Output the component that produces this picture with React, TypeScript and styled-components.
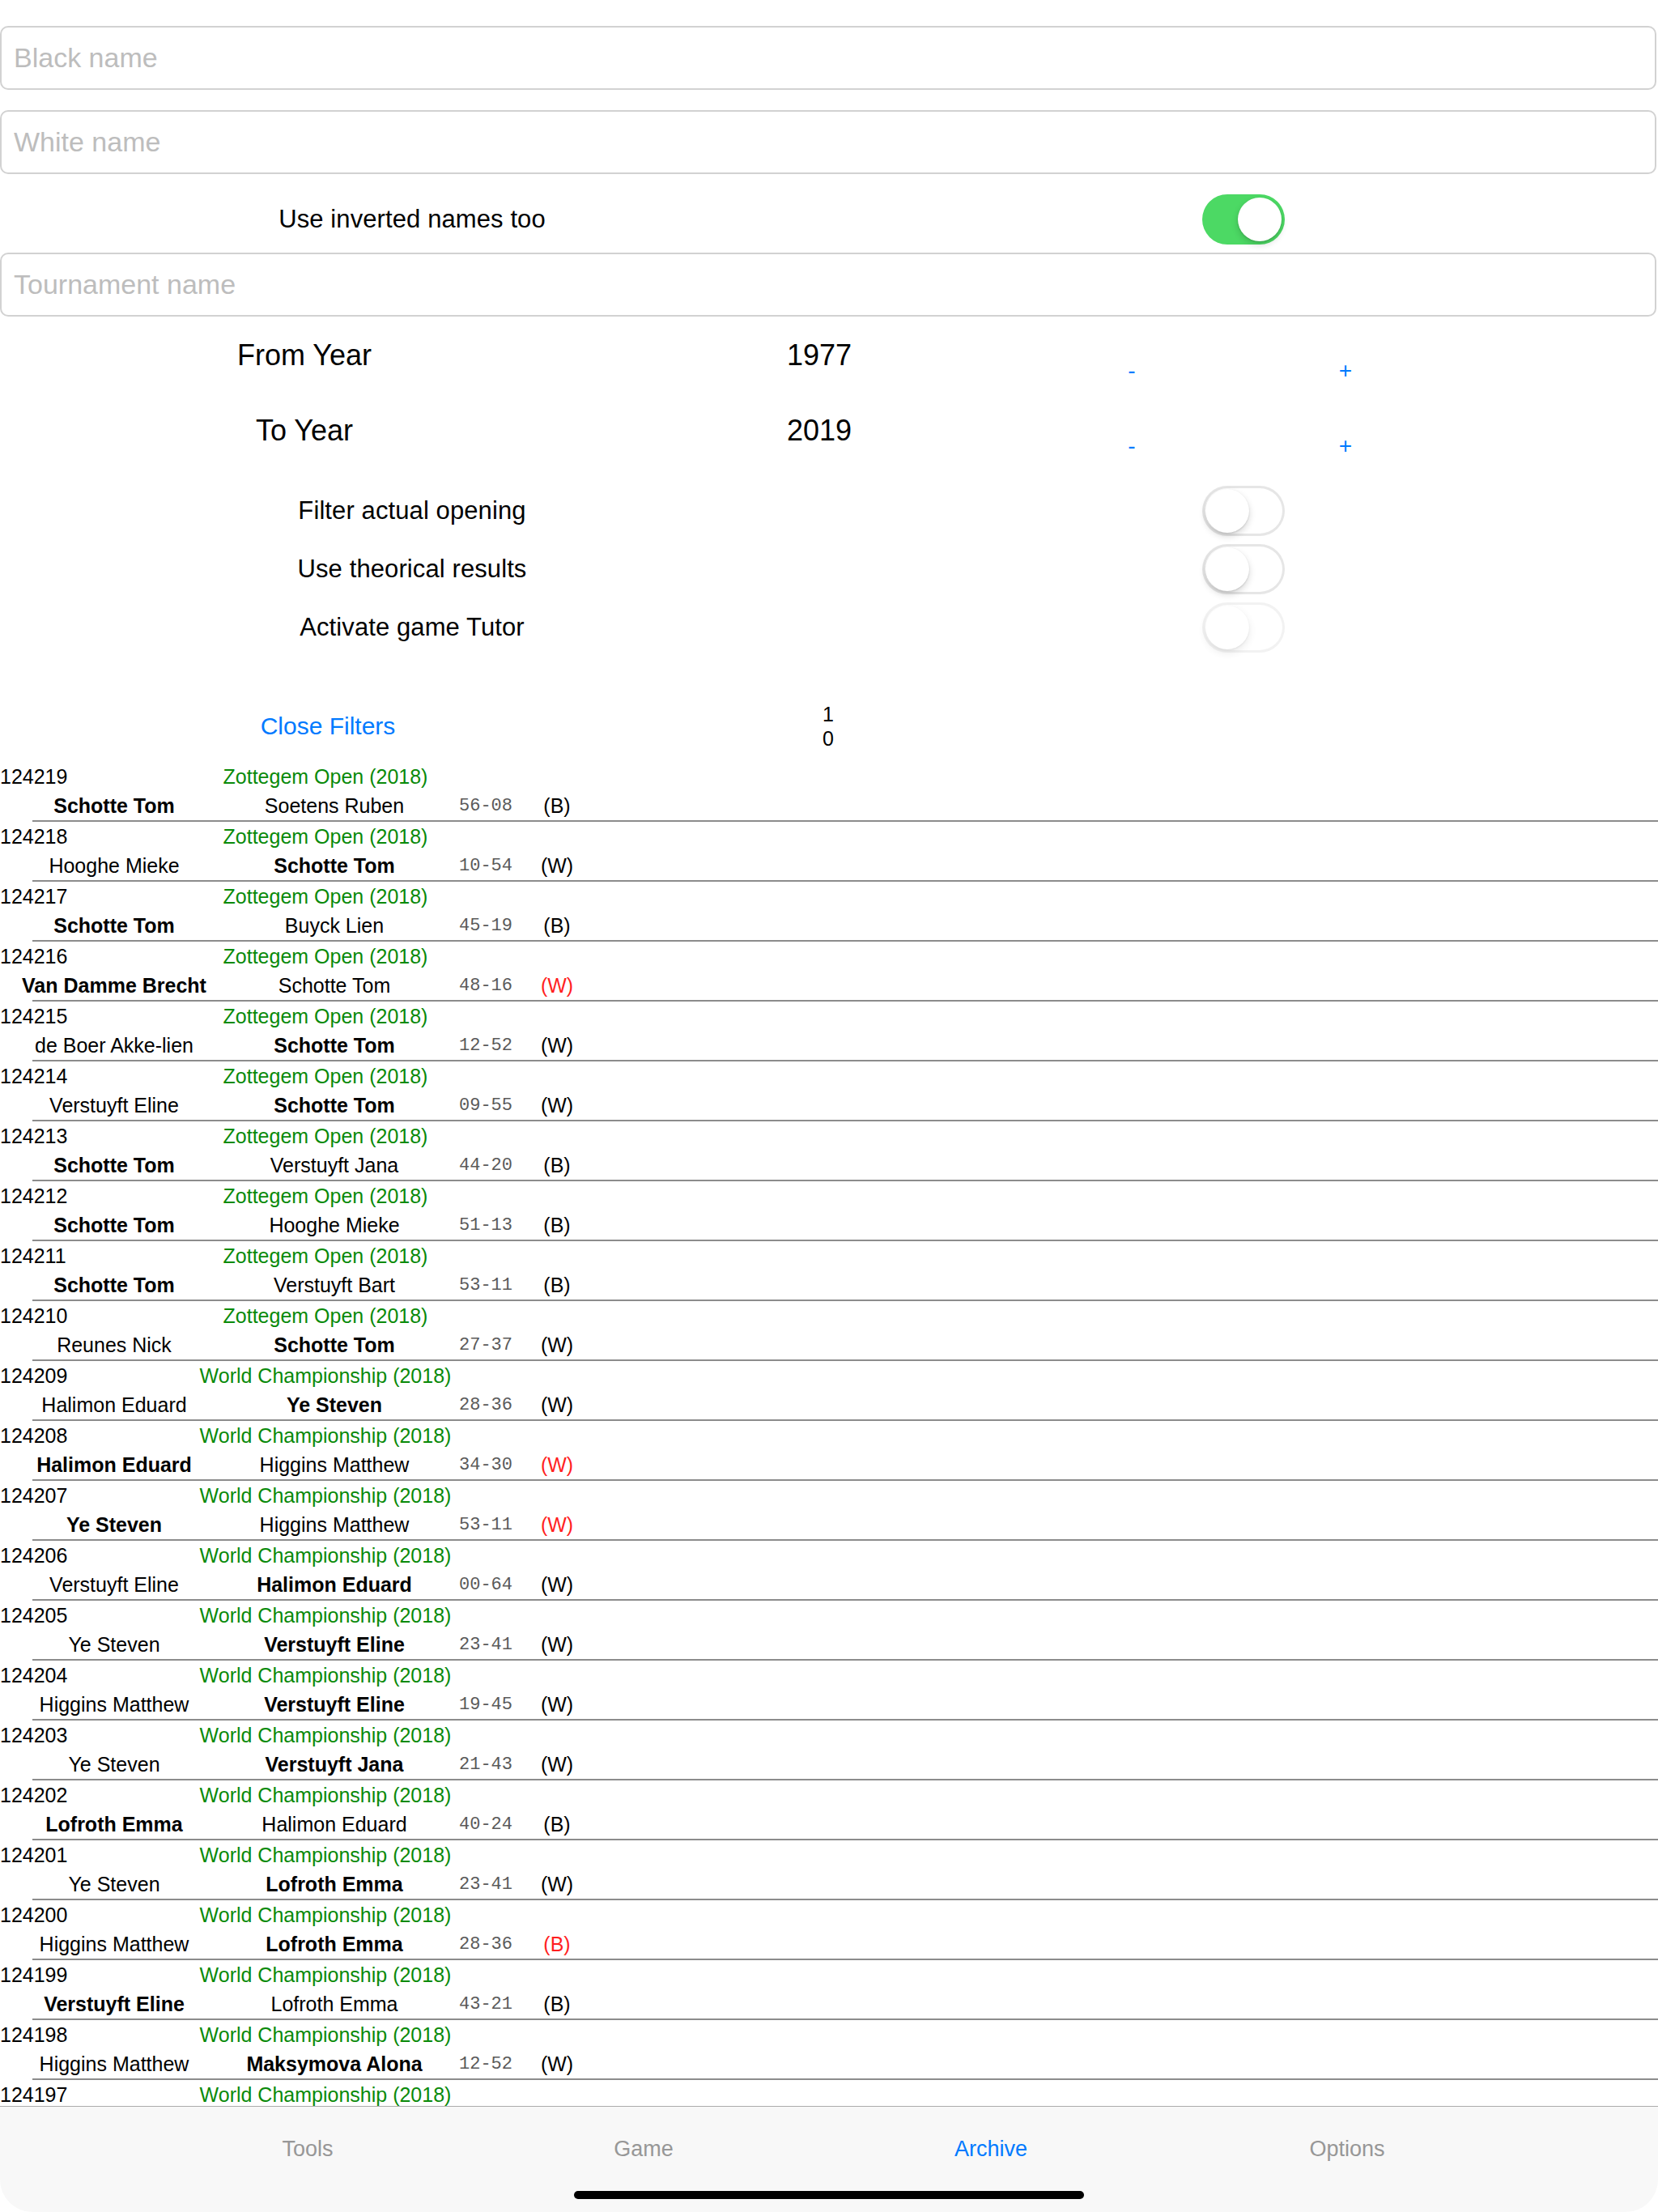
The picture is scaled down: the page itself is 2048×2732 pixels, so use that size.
import React, { useState } from "react";
import styled, { createGlobalStyle } from "styled-components";

const GlobalStyle = createGlobalStyle`
    html, body {
        margin: 0;
        padding: 0;
        background: #ffffff;
    }
    body {
        font-family: "Liberation Sans", Arial, sans-serif;
        color: #000000;
    }
    * {
        box-sizing: border-box;
    }
`;

const BLUE = "#007aff";

const Page = styled.div`
    width: 2048px;
    height: 2732px;
    display: flex;
    flex-direction: column;
    overflow: hidden;
    background: #ffffff;
`;

const Filters = styled.div`
    display: flex;
    flex-direction: column;
    padding-top: 32px;
`;

const TextField = styled.input<{ $gap?: number }>`
    display: block;
    width: 2046px;
    height: 79px;
    margin: 0 0 ${(p) => p.$gap ?? 0}px 0;
    padding: 0 0 0 15px;
    border: 2px solid #d2d2d2;
    border-radius: 10px;
    font-family: "Liberation Sans", Arial, sans-serif;
    font-size: 34px;
    color: #000;
    outline: none;
    background: #fff;

    &::placeholder {
        color: #bdbdbd;
    }
`;

const ToggleRow = styled.div<{ $height: number; $top?: number; $bottom?: number }>`
    display: grid;
    grid-template-columns: 1018px 1030px;
    align-items: center;
    justify-items: center;
    height: ${(p) => p.$height}px;
    margin-top: ${(p) => p.$top ?? 0}px;
    margin-bottom: ${(p) => p.$bottom ?? 0}px;
`;

const ToggleLabel = styled.span`
    font-size: 31px;
    letter-spacing: 0.1px;
`;

const SwitchTrack = styled.div<{ $on: boolean; $disabled?: boolean }>`
    position: relative;
    width: 102px;
    height: 62px;
    border-radius: 31px;
    background: ${(p) => (p.$on ? "#4cd964" : "#ffffff")};
    box-shadow: ${(p) => (p.$on ? "none" : "inset 0 0 0 3px #e6e6e6")};
    opacity: ${(p) => (p.$disabled ? 0.5 : 1)};
    cursor: pointer;
    margin-left: 6px;
`;

const SwitchKnob = styled.div<{ $on: boolean }>`
    position: absolute;
    top: 4px;
    left: ${(p) => (p.$on ? "44px" : "4px")};
    width: 54px;
    height: 54px;
    border-radius: 50%;
    background: #ffffff;
    box-shadow: 0 4px 9px rgba(0, 0, 0, 0.16), 0 1px 2px rgba(0, 0, 0, 0.14);
`;

const YearRow = styled.div`
    display: grid;
    grid-template-columns: 752px 520px 252px 276px;
    align-items: center;
    justify-items: center;
    height: 93px;
    padding-top: 3px;
`;

const YearLabel = styled.span`
    font-size: 36px;
`;

const YearValue = styled.span`
    font-size: 36px;
`;

const StepButton = styled.button`
    border: none;
    background: transparent;
    padding: 38px 0 0 0;
    font-family: "Liberation Sans", Arial, sans-serif;
    font-size: 28px;
    line-height: 32px;
    color: ${BLUE};
    cursor: pointer;
`;

const FooterRow = styled.div`
    display: grid;
    grid-template-columns: 810px 426px;
    align-items: center;
    justify-items: center;
    height: 60px;
    margin-top: 56px;
    margin-bottom: 14px;
`;

const LinkButton = styled.button`
    border: none;
    background: transparent;
    padding: 0;
    font-family: "Liberation Sans", Arial, sans-serif;
    font-size: 30px;
    color: ${BLUE};
    cursor: pointer;
`;

const Counter = styled.div`
    font-size: 25px;
    line-height: 30px;
    text-align: center;
`;

const List = styled.div`
    flex: 1;
    overflow: hidden;
`;

const GameRow = styled.div`
    display: flex;
    flex-direction: column;
`;

const HeadLine = styled.div`
    display: grid;
    grid-template-columns: 120px 564px;
    align-items: center;
    height: 36px;
    font-size: 25px;
`;

const GameId = styled.span`
    color: #000;
`;

const Tournament = styled.span`
    color: #0a8a0a;
    text-align: center;
`;

const PlayersLine = styled.div`
    display: grid;
    grid-template-columns: 282px 262px 112px 64px;
    align-items: center;
    justify-items: center;
    height: 36px;
    font-size: 25px;
`;

const Player = styled.span<{ $bold: boolean }>`
    font-weight: ${(p) => (p.$bold ? 700 : 400)};
    white-space: nowrap;
`;

const Score = styled.span`
    font-family: "Liberation Mono", "Courier New", monospace;
    font-size: 22px;
    color: #5a5a5a;
`;

const Result = styled.span<{ $lost: boolean }>`
    color: ${(p) => (p.$lost ? "#ff1f1f" : "#000")};
`;

const Divider = styled.div`
    height: 2px;
    margin-left: 40px;
    background: #8c8c8c;
`;

const TabBar = styled.div`
    flex: 0 0 131px;
    display: flex;
    flex-direction: column;
    background: #f8f8f8;
    border-top: 1px solid #ababab;
    border-bottom-left-radius: 40px;
    border-bottom-right-radius: 40px;
`;

const TabRow = styled.div`
    display: grid;
    grid-template-columns: 440px 390px 468px 412px;
    padding-left: 160px;
    align-items: center;
    justify-items: center;
    height: 104px;
`;

const TabItem = styled.span<{ $active: boolean }>`
    font-size: 27px;
    color: ${(p) => (p.$active ? BLUE : "#979797")};
`;

const HomeIndicator = styled.div`
    width: 630px;
    height: 10px;
    margin: 0 auto;
    border-radius: 5px;
    background: #000;
`;

const ZOT = "Zottegem Open (2018)";
const WCH = "World Championship (2018)";

interface IGame {
    id: number;
    tournament: string;
    black?: string;
    white?: string;
    score?: string;
    result?: string;
    bold?: 1 | 2;
    lost?: boolean;
}

const games: IGame[] = [
    { id: 124219, tournament: ZOT, black: "Schotte Tom", white: "Soetens Ruben", score: "56-08", result: "(B)", bold: 1 },
    { id: 124218, tournament: ZOT, black: "Hooghe Mieke", white: "Schotte Tom", score: "10-54", result: "(W)", bold: 2 },
    { id: 124217, tournament: ZOT, black: "Schotte Tom", white: "Buyck Lien", score: "45-19", result: "(B)", bold: 1 },
    { id: 124216, tournament: ZOT, black: "Van Damme Brecht", white: "Schotte Tom", score: "48-16", result: "(W)", bold: 1, lost: true },
    { id: 124215, tournament: ZOT, black: "de Boer Akke-lien", white: "Schotte Tom", score: "12-52", result: "(W)", bold: 2 },
    { id: 124214, tournament: ZOT, black: "Verstuyft Eline", white: "Schotte Tom", score: "09-55", result: "(W)", bold: 2 },
    { id: 124213, tournament: ZOT, black: "Schotte Tom", white: "Verstuyft Jana", score: "44-20", result: "(B)", bold: 1 },
    { id: 124212, tournament: ZOT, black: "Schotte Tom", white: "Hooghe Mieke", score: "51-13", result: "(B)", bold: 1 },
    { id: 124211, tournament: ZOT, black: "Schotte Tom", white: "Verstuyft Bart", score: "53-11", result: "(B)", bold: 1 },
    { id: 124210, tournament: ZOT, black: "Reunes Nick", white: "Schotte Tom", score: "27-37", result: "(W)", bold: 2 },
    { id: 124209, tournament: WCH, black: "Halimon Eduard", white: "Ye Steven", score: "28-36", result: "(W)", bold: 2 },
    { id: 124208, tournament: WCH, black: "Halimon Eduard", white: "Higgins Matthew", score: "34-30", result: "(W)", bold: 1, lost: true },
    { id: 124207, tournament: WCH, black: "Ye Steven", white: "Higgins Matthew", score: "53-11", result: "(W)", bold: 1, lost: true },
    { id: 124206, tournament: WCH, black: "Verstuyft Eline", white: "Halimon Eduard", score: "00-64", result: "(W)", bold: 2 },
    { id: 124205, tournament: WCH, black: "Ye Steven", white: "Verstuyft Eline", score: "23-41", result: "(W)", bold: 2 },
    { id: 124204, tournament: WCH, black: "Higgins Matthew", white: "Verstuyft Eline", score: "19-45", result: "(W)", bold: 2 },
    { id: 124203, tournament: WCH, black: "Ye Steven", white: "Verstuyft Jana", score: "21-43", result: "(W)", bold: 2 },
    { id: 124202, tournament: WCH, black: "Lofroth Emma", white: "Halimon Eduard", score: "40-24", result: "(B)", bold: 1 },
    { id: 124201, tournament: WCH, black: "Ye Steven", white: "Lofroth Emma", score: "23-41", result: "(W)", bold: 2 },
    { id: 124200, tournament: WCH, black: "Higgins Matthew", white: "Lofroth Emma", score: "28-36", result: "(B)", bold: 2, lost: true },
    { id: 124199, tournament: WCH, black: "Verstuyft Eline", white: "Lofroth Emma", score: "43-21", result: "(B)", bold: 1 },
    { id: 124198, tournament: WCH, black: "Higgins Matthew", white: "Maksymova Alona", score: "12-52", result: "(W)", bold: 2 },
    // 마지막 줄은 탭바 뒤로 잘려서 제목만 보임
    { id: 124197, tournament: WCH },
];

const tabs = ["Tools", "Game", "Archive", "Options"];

interface ISwitchProps {
    on: boolean;
    disabled?: boolean;
    onToggle?: () => void;
}

const Switch: React.FC<ISwitchProps> = ({ on, disabled, onToggle }) => (
    <SwitchTrack $on={on} $disabled={disabled} role="switch" aria-checked={on} onClick={disabled ? undefined : onToggle}>
        <SwitchKnob $on={on} />
    </SwitchTrack>
);

const App: React.FC = () => {
    const [inverted, setInverted] = useState(true);
    const [filterOpening, setFilterOpening] = useState(false);
    const [theorical, setTheorical] = useState(false);
    const [fromYear, setFromYear] = useState(1977);
    const [toYear, setToYear] = useState(2019);

    return (
        <Page>
            <GlobalStyle />
            <Filters>
                <TextField placeholder="Black name" $gap={25} />
                <TextField placeholder="White name" />
                <ToggleRow $height={63} $top={24} $bottom={10}>
                    <ToggleLabel>Use inverted names too</ToggleLabel>
                    <Switch on={inverted} onToggle={() => setInverted(!inverted)} />
                </ToggleRow>
                <TextField placeholder="Tournament name" />
                <YearRow>
                    <YearLabel>From Year</YearLabel>
                    <YearValue>{fromYear}</YearValue>
                    <StepButton onClick={() => setFromYear(fromYear - 1)}>-</StepButton>
                    <StepButton onClick={() => setFromYear(fromYear + 1)}>+</StepButton>
                </YearRow>
                <YearRow>
                    <YearLabel>To Year</YearLabel>
                    <YearValue>{toYear}</YearValue>
                    <StepButton onClick={() => setToYear(toYear - 1)}>-</StepButton>
                    <StepButton onClick={() => setToYear(toYear + 1)}>+</StepButton>
                </YearRow>
                <ToggleRow $height={72} $top={18}>
                    <ToggleLabel>Filter actual opening</ToggleLabel>
                    <Switch on={filterOpening} onToggle={() => setFilterOpening(!filterOpening)} />
                </ToggleRow>
                <ToggleRow $height={72}>
                    <ToggleLabel>Use theorical results</ToggleLabel>
                    <Switch on={theorical} onToggle={() => setTheorical(!theorical)} />
                </ToggleRow>
                <ToggleRow $height={72}>
                    <ToggleLabel>Activate game Tutor</ToggleLabel>
                    <Switch on={false} disabled />
                </ToggleRow>
                <FooterRow>
                    <LinkButton>Close Filters</LinkButton>
                    <Counter>
                        1
                        <br />0
                    </Counter>
                </FooterRow>
            </Filters>
            <List>
                {games.map((g) => (
                    <GameRow key={g.id}>
                        <HeadLine>
                            <GameId>{g.id}</GameId>
                            <Tournament>{g.tournament}</Tournament>
                        </HeadLine>
                        {g.black && (
                            <>
                                <PlayersLine>
                                    <Player $bold={g.bold === 1}>{g.black}</Player>
                                    <Player $bold={g.bold === 2}>{g.white}</Player>
                                    <Score>{g.score}</Score>
                                    <Result $lost={!!g.lost}>{g.result}</Result>
                                </PlayersLine>
                                <Divider />
                            </>
                        )}
                    </GameRow>
                ))}
            </List>
            <TabBar>
                <TabRow>
                    {tabs.map((t) => (
                        <TabItem key={t} $active={t === "Archive"}>
                            {t}
                        </TabItem>
                    ))}
                </TabRow>
                <HomeIndicator />
            </TabBar>
        </Page>
    );
};

export default App;
